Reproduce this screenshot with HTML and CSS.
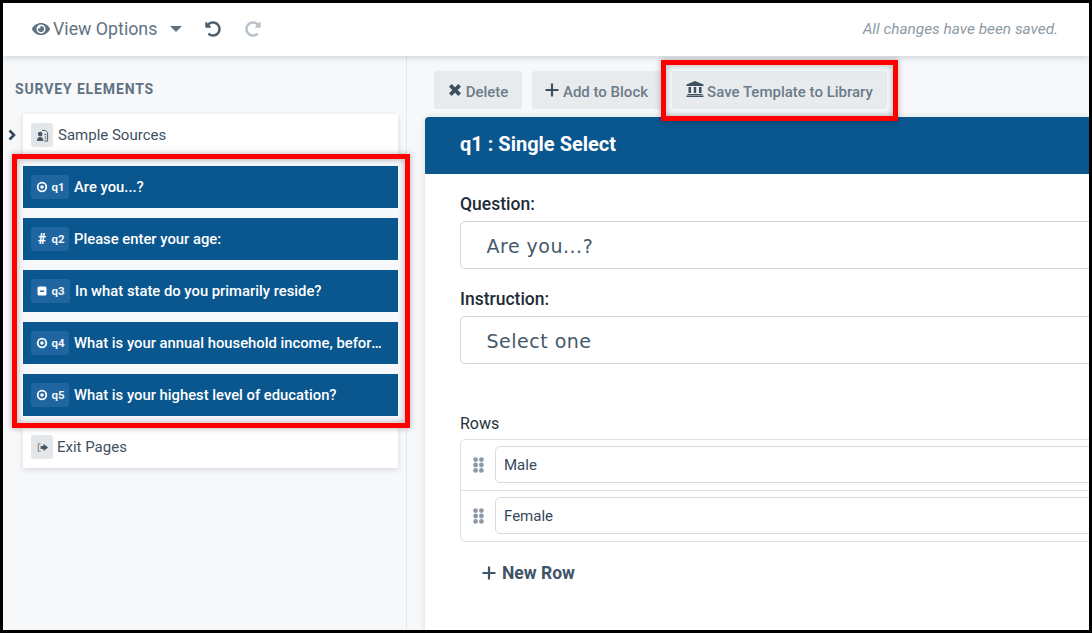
FILE: index.html
```html
<!DOCTYPE html>
<html lang="en">
<head>
<meta charset="utf-8">
<title>Survey Builder</title>
<link rel="stylesheet" href="styles.css">
</head>
<body>
<div class="frame">
  <header class="topbar">
    <div class="view-options">
      <svg class="eye" viewBox="0 0 576 512"><path d="M572.52 241.4C518.29 135.59 410.93 64 288 64S57.68 135.64 3.48 241.41a32.4 32.4 0 0 0 0 29.19C57.71 376.41 165.07 448 288 448s230.32-71.64 284.52-177.41a32.4 32.4 0 0 0 0-29.19zM288 400a144 144 0 1 1 144-144 143.93 143.93 0 0 1-144 144zm0-240a95.31 95.31 0 0 0-25.31 3.79 47.85 47.85 0 0 1-66.9 66.9A95.78 95.78 0 1 0 288 160z"/></svg>
      <span class="view-label">View Options</span>
      <span class="caret"></span>
    </div>
    <svg class="undo" viewBox="0 0 512 512"><path d="M255.545 8c-66.269.119-126.438 26.233-170.86 68.685L48.971 40.971C33.851 25.851 8 36.559 8 57.941V192c0 13.255 10.745 24 24 24h134.059c21.382 0 32.09-25.851 16.971-40.971l-41.75-41.75c30.864-28.899 70.801-44.907 113.23-45.273 92.398-.798 170.283 73.977 169.484 169.442C423.236 348.009 349.816 424 256 424c-41.127 0-79.997-14.678-110.63-41.556-4.743-4.161-11.906-3.908-16.368.553L89.34 422.659c-4.872 4.872-4.631 12.815.482 17.433C133.798 479.813 192.074 504 256 504c136.966 0 247.999-111.033 248-247.998C504.001 119.193 392.354 7.755 255.545 8z"/></svg>
    <svg class="redo" viewBox="0 0 512 512"><path transform="matrix(-1 0 0 1 512 0)" d="M255.545 8c-66.269.119-126.438 26.233-170.86 68.685L48.971 40.971C33.851 25.851 8 36.559 8 57.941V192c0 13.255 10.745 24 24 24h134.059c21.382 0 32.09-25.851 16.971-40.971l-41.75-41.75c30.864-28.899 70.801-44.907 113.23-45.273 92.398-.798 170.283 73.977 169.484 169.442C423.236 348.009 349.816 424 256 424c-41.127 0-79.997-14.678-110.63-41.556-4.743-4.161-11.906-3.908-16.368.553L89.34 422.659c-4.872 4.872-4.631 12.815.482 17.433C133.798 479.813 192.074 504 256 504c136.966 0 247.999-111.033 248-247.998C504.001 119.193 392.354 7.755 255.545 8z"/></svg>
    <span class="saved">All changes have been saved.</span>
  </header>
  <div class="main">
    <aside class="sidebar">
      <h2 class="side-title">SURVEY ELEMENTS</h2>
      <ul class="elements">
        <li class="element plain">
          <svg class="chevron" viewBox="0 0 10 12"><path d="M2.500 1.500 7 6l-4.500 4.500"/></svg>
          <span class="tile"><svg class="tile-icon" viewBox="0 0 14 14"><path class="ic-dark" d="M1 13c0-3 1.500-4.500 3.500-4.500S8 10 8 13zM4.500 8a2.500 2.500 0 1 1 0-5 2.500 2.500 0 0 1 0 5z"/><path class="ic-line" d="M6.500 1.500h3.800l2.200 2.200V13H9"/><path class="ic-line" d="M9 6h2M9.500 8.500H11M9.500 10.500H11"/></svg></span>
          <span class="label">Sample Sources</span>
        </li>
        <li class="element question">
          <span class="badge"><svg class="q-icon" viewBox="0 0 12 12"><circle cx="6" cy="6" r="4.300" class="ring"/><circle cx="6" cy="6" r="1.800" class="dot"/></svg><span class="qid">q1</span></span>
          <span class="label">Are you...?</span>
        </li>
        <li class="element question">
          <span class="badge"><span class="hash">#</span><span class="qid">q2</span></span>
          <span class="label">Please enter your age:</span>
        </li>
        <li class="element question">
          <span class="badge wide"><svg class="q-icon" viewBox="0 0 12 12"><rect x="1.500" y="1.500" width="9" height="9" rx="1.500" class="dot"/><path d="M4 6.200h4" class="minus"/></svg><span class="qid">q3</span></span>
          <span class="label">In what state do you primarily reside?</span>
        </li>
        <li class="element question">
          <span class="badge"><svg class="q-icon" viewBox="0 0 12 12"><circle cx="6" cy="6" r="4.300" class="ring"/><circle cx="6" cy="6" r="1.800" class="dot"/></svg><span class="qid">q4</span></span>
          <span class="label">What is your annual household income, before taxes?</span>
        </li>
        <li class="element question">
          <span class="badge"><svg class="q-icon" viewBox="0 0 12 12"><circle cx="6" cy="6" r="4.300" class="ring"/><circle cx="6" cy="6" r="1.800" class="dot"/></svg><span class="qid">q5</span></span>
          <span class="label">What is your highest level of education?</span>
        </li>
        <li class="element plain">
          <span class="tile"><svg class="tile-icon" viewBox="0 0 14 14"><path class="ic-tan" d="M5 3H2.500v8H5"/><path class="ic-dark" d="M5 5.500h3V3l5 4-5 4V8.500H5z"/></svg></span>
          <span class="label exit">Exit Pages</span>
        </li>
      </ul>
      <div class="highlight list-highlight"></div>
    </aside>
    <section class="content">
      <div class="toolbar">
        <button class="tool tool-delete"><svg class="ico-x" viewBox="0 0 12 12"><path d="M2 2l8 8M10 2l-8 8"/></svg><span class="tool-text">Delete</span></button>
        <button class="tool tool-add"><svg class="ico-plus" viewBox="0 0 14 14"><path d="M7 .5v13M.5 7h13"/></svg><span class="tool-text">Add to Block</span></button>
        <button class="tool tool-save"><svg class="ico-bank" viewBox="0 0 18 16"><path d="M9 0 .5 3.500V5h17V3.500zM2.500 6h2.500v6H2.500zM7.800 6h2.400v6H7.800zM13 6h2.500v6H13zM1.500 13h15v1H1.500zM.5 14.500h17V16H.5z"/></svg><span class="tool-text">Save Template to Library</span></button>
      </div>
      <article class="card">
        <h1 class="card-head">q1 : Single Select</h1>
        <div class="card-body">
          <div class="field-label">Question:</div>
          <div class="text-box">Are you...?</div>
          <div class="field-label second">Instruction:</div>
          <div class="text-box">Select one</div>
          <div class="rows-label">Rows</div>
          <div class="rows">
            <div class="row">
              <svg class="grip" viewBox="0 0 11 16"><g><circle cx="2.600" cy="2.600" r="2.400"/><circle cx="8.400" cy="2.600" r="2.400"/><circle cx="2.600" cy="8" r="2.400"/><circle cx="8.400" cy="8" r="2.400"/><circle cx="2.600" cy="13.400" r="2.400"/><circle cx="8.400" cy="13.400" r="2.400"/></g></svg>
              <div class="row-input">Male</div>
            </div>
            <div class="row">
              <svg class="grip" viewBox="0 0 11 16"><g><circle cx="2.600" cy="2.600" r="2.400"/><circle cx="8.400" cy="2.600" r="2.400"/><circle cx="2.600" cy="8" r="2.400"/><circle cx="8.400" cy="8" r="2.400"/><circle cx="2.600" cy="13.400" r="2.400"/><circle cx="8.400" cy="13.400" r="2.400"/></g></svg>
              <div class="row-input">Female</div>
            </div>
          </div>
          <div class="new-row"><svg class="ico-plus-lg" viewBox="0 0 14 14"><path d="M7 .5v13M.5 7h13"/></svg>New Row</div>
        </div>
      </article>
      <div class="highlight save-highlight"></div>
    </section>
  </div>
</div>
</body>
</html>
```
FILE: styles.css
```css
* { box-sizing: border-box; }
html, body { margin: 0; padding: 0; }
body { font-family: Roboto, "Liberation Sans", sans-serif; background: #000; }

.frame {
  position: relative;
  width: 1092px;
  height: 633px;
  border: 3px solid #000;
  background: #f6f8fa;
  overflow: hidden;
  display: flex;
  flex-direction: column;
}

.topbar {
  position: relative;
  z-index: 2;
  flex: 0 0 53px;
  height: 53px;
  display: flex;
  align-items: center;
  padding: 0 31px 2px 29px;
  background: #fff;
  box-shadow: 0 2px 6px rgba(60, 70, 80, .2);
}
.view-options { display: flex; align-items: center; }
.eye { width: 18px; height: 16px; fill: #5f7282; margin-right: 3px; }
.view-label { font-size: 17.800px; color: #5f7282; }
.caret {
  width: 0; height: 0;
  margin-left: 13px;
  border-left: 6px solid transparent;
  border-right: 6px solid transparent;
  border-top: 6px solid #5f7282;
}
.undo { width: 16px; height: 16px; fill: #4d5f6e; margin-left: 23px; }
.redo { width: 16px; height: 16px; fill: #b8c2cb; margin-left: 24px; }
.saved { margin-left: auto; font-size: 15.400px; font-style: italic; color: #8d9aa6; }

.main { flex: 1; display: flex; min-height: 0; }

.sidebar {
  position: relative;
  flex: 0 0 404px;
  border-right: 1px solid #e6e9ec;
}
.side-title {
  margin: 24px 0 0 12px;
  height: 18px;
  line-height: 18px;
  font-size: 14px;
  font-weight: 700;
  letter-spacing: .86px;
  color: #5f7282;
}
.elements {
  list-style: none;
  margin: 16px 0 0 20px;
  padding: 0;
  width: 375px;
  display: flex;
  flex-direction: column;
  gap: 10px;
}
.element {
  position: relative;
  height: 42px;
  display: flex;
  align-items: center;
  padding-left: 8px;
  font-size: 15px;
  white-space: nowrap;
}
.plain { background: #fff; color: #3f4f5e; box-shadow: 0 2px 5px rgba(60, 70, 80, .16); }
.question { background: #0a568e; color: #fff; font-size: 14.800px; font-weight: 500; padding-right: 14px; }
.chevron {
  position: absolute;
  left: -16px;
  top: 15px;
  width: 10px;
  height: 12px;
  fill: none;
  stroke: #34495e;
  stroke-width: 2.600;
}
.tile {
  flex: none;
  width: 22px;
  height: 24px;
  display: flex;
  align-items: center;
  justify-content: center;
  margin-right: 5px;
  border-radius: 3px;
  background: #e4e7ea;
}
.tile-icon { width: 13px; height: 13px; }
.ic-dark { fill: #465766; }
.ic-line { fill: none; stroke: #465766; stroke-width: 1; }
.ic-tan { fill: none; stroke: #a98f78; stroke-width: 1.400; }
.label { overflow: hidden; text-overflow: ellipsis; }
.exit { margin-left: -1px; }
.badge {
  flex: none;
  width: 38px;
  height: 24px;
  display: flex;
  align-items: center;
  padding-left: 5px;
  margin-right: 5px;
  border-radius: 3px;
  background: #1f659f;
  font-size: 11.500px;
  font-weight: 700;
}
.badge.wide { width: 39px; margin-right: 5px; }
.q-icon { width: 12px; height: 12px; flex: none; }
.ring { fill: none; stroke: #fff; stroke-width: 1.800; }
.dot { fill: #fff; }
.minus { stroke: #1f659f; stroke-width: 1.400; fill: none; }
.hash { width: 12px; font-size: 14px; font-weight: 900; text-align: center; line-height: 1; }
.qid { margin-left: 3.500px; color: #f0f5f9; }

.content { position: relative; flex: 1; min-width: 0; padding: 15px 0 0 18px; }
.toolbar { display: flex; gap: 10px; margin: 0 0 8px 9px; }
.tool {
  display: flex;
  align-items: center;
  justify-content: center;
  height: 38px;
  padding: 0;
  border: 0;
  border-radius: 3px;
  background: #e8ebee;
  color: #6b7b89;
  font-family: inherit;
  font-size: 15px;
  font-weight: 500;
}
.tool-text { padding-top: 3px; }
.tool-delete { width: 88px; }
.tool-add { width: 130px; padding-right: 1px; }
.tool-save { width: 215px; }
.ico-x { width: 14px; height: 14px; margin-right: 4px; fill: none; stroke: #3e5060; stroke-width: 3.200; }
.ico-plus { width: 14px; height: 14px; margin-right: 4px; fill: none; stroke: #3e5060; stroke-width: 2.200; }
.ico-bank { width: 18px; height: 16px; margin: -3px 3px 0 0; fill: #3e5060; }

.card {
  height: 600px;
  border-radius: 4px 0 0 0;
  background: #fff;
  overflow: hidden;
  box-shadow: 0 0 6px rgba(60, 70, 80, .14);
}
.card-head {
  margin: 0;
  height: 57px;
  line-height: 55px;
  padding-left: 35px;
  background: #0a568e;
  color: #fff;
  font-size: 20px;
  font-weight: 700;
}
.card-body { padding: 20px 0 0 35px; }
.field-label { height: 20px; line-height: 20px; font-size: 17.500px; font-weight: 500; color: #1f2b37; margin-bottom: 7px; }
.field-label.second { margin-top: 20px; margin-bottom: 7px; }
.text-box {
  height: 48px;
  margin-right: -20px;
  padding-left: 25.500px;
  line-height: 49px;
  border: 1px solid #cfd4d8;
  border-radius: 5px;
  background: #fff;
  font-family: "DejaVu Sans", sans-serif;
  font-size: 19px;
  letter-spacing: .5px;
  color: #46596b;
}
.rows-label { margin-top: 50px; height: 20px; line-height: 20px; font-size: 16px; color: #25313d; }
.rows {
  margin-top: 5px;
  margin-right: -20px;
  height: 103px;
  border: 1px solid #dfe2e5;
  border-radius: 5px;
}
.row { display: flex; align-items: flex-start; padding: 6px 0 0 12px; height: 50px; }
.row + .row { height: 51px; border-top: 1px solid #dfe2e5; }
.grip { flex: none; width: 11px; height: 16px; margin: 11px 11px 0 0; fill: #8d9aa6; }
.row-input {
  flex: 1;
  height: 37px;
  line-height: 37px;
  padding-left: 8px;
  border: 1px solid #d8dcdf;
  border-radius: 5px;
  font-size: 15px;
  color: #34495e;
}
.new-row {
  display: flex;
  align-items: center;
  margin: 20px 0 0 22px;
  height: 22px;
  font-size: 17.500px;
  font-weight: 700;
  color: #3f5468;
}
.ico-plus-lg { width: 14px; height: 14px; margin-right: 6px; fill: none; stroke: #3f5468; stroke-width: 2.200; }

.highlight {
  position: absolute;
  border: 5px solid #f00;
  box-shadow: 0 0 6px rgba(0, 0, 0, .3), inset 0 0 7px rgba(0, 0, 0, .3);
  pointer-events: none;
}
.list-highlight { left: 9px; top: 98px; width: 398px; height: 274px; }
.save-highlight { left: 254px; top: 4px; width: 237px; height: 61px; }
```
